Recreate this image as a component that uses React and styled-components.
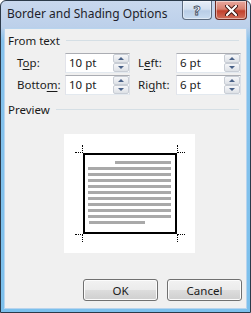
import styled, { createGlobalStyle } from 'styled-components';

const GlobalStyle = createGlobalStyle`
  html, body {
    margin: 0;
    padding: 0;
    background: #ffffff;
  }
  * {
    box-sizing: border-box;
  }
`;

const Window = styled.div`
  width: 251px;
  height: 313px;
  display: flex;
  flex-direction: column;
  border: 1px solid #2b3a4a;
  border-radius: 6px 6px 0 0;
  padding: 0 3px 3px 3px;
  background: linear-gradient(180deg, #c8d8ee 0px, #bcd0ea 26px, #86c2ec 40px, #7cc0ec 100%);
  font-family: "Noto Sans", "Open Sans", sans-serif;
  font-size: 11.5px;
  color: #1a1a1a;
`;

const TitleBar = styled.div`
  height: 27px;
  display: flex;
  align-items: flex-start;
  justify-content: space-between;
  padding-left: 3px;
`;

const Title = styled.div`
  font-size: 12px;
  line-height: 16px;
  margin-top: 5px;
  color: #1e1e2a;
`;

const CaptionButtons = styled.div`
  display: flex;
  gap: 3px;
`;

const CaptionButton = styled.div`
  width: ${p => p.$w}px;
  height: 19px;
  display: flex;
  align-items: center;
  justify-content: center;
  border: 1px solid ${p => (p.$close ? '#6b2b24' : '#5d6c80')};
  border-top: none;
  border-radius: 0 0 4px 4px;
  background: ${p =>
    p.$close
      ? 'linear-gradient(180deg, #e9a99f 0%, #d8806f 45%, #c2402c 55%, #d0705c 100%)'
      : 'linear-gradient(180deg, #e6eef8 0%, #d3e0f0 45%, #b9cde6 55%, #c9dcf0 100%)'};
  box-shadow: inset 0 0 0 1px rgba(255, 255, 255, 0.45);
`;

const HelpGlyph = styled.span`
  font-family: "DejaVu Sans", sans-serif;
  font-weight: bold;
  font-size: 13px;
  line-height: 13px;
  color: #ffffff;
  -webkit-text-stroke: 0.8px #3d4b5e;
`;

const Client = styled.div`
  flex: 1;
  display: flex;
  flex-direction: column;
  background: #f0f0f0;
  border: 1px solid #b8d4ee;
  padding: 3px 4px 7px 0;
`;

const GroupHeader = styled.div`
  display: flex;
  align-items: center;
  height: 16px;
  padding-left: 3px;
  margin-top: ${p => p.$top || 0}px;

  &::after {
    content: '';
    flex: 1;
    height: 1px;
    margin-left: 6px;
    margin-right: 3px;
    background: #d5dfe5;
  }
`;

const FieldsGrid = styled.div`
  display: grid;
  grid-template-columns: 48px 65px 46px 65px;
  row-gap: 2px;
  margin-top: 5px;
  padding-left: 12px;
  align-items: center;
`;

const Label = styled.label`
  line-height: 20px;
  padding-left: ${p => (p.$indent ? 8 : 0)}px;
  u {
    text-decoration: underline;
    text-underline-offset: 2px;
  }
`;

const SpinBox = styled.div`
  height: 20px;
  display: flex;
  border: 1px solid #abadb3;
  border-left-color: #e2e3ea;
  border-right-color: #dbdfe6;
  border-bottom-color: #e3e9ef;
  background: #ffffff;
`;

const SpinValue = styled.div`
  flex: 1;
  padding-left: 3px;
  line-height: 18px;
`;

const SpinButtons = styled.div`
  width: 16px;
  display: flex;
  flex-direction: column;
`;

const SpinButton = styled.div`
  flex: 1;
  display: flex;
  align-items: center;
  justify-content: center;
  border: 1px solid #c8cdd5;
  border-radius: 2px;
  background: linear-gradient(180deg, #f6f7f9 0%, #eaecf0 50%, #dde1e6 100%);
`;

const Arrow = styled.span`
  width: 0;
  height: 0;
  border-left: 3px solid transparent;
  border-right: 3px solid transparent;
  ${p =>
    p.$up
      ? 'border-bottom: 3px solid #4a6288;'
      : 'border-top: 3px solid #4a6288;'}
`;

const PreviewBox = styled.div`
  width: 131px;
  height: 119px;
  margin-top: 17px;
  margin-left: 59px;
  background: #ffffff;
  display: flex;
  align-items: center;
  justify-content: center;
`;

const Page = styled.div`
  position: relative;
  width: 94px;
  height: 81px;
  border: 2px solid #000000;
  padding: 6px 4px 0 4px;
  display: flex;
  flex-direction: column;
  gap: 3px;
`;

const TextLine = styled.div`
  height: 3px;
  width: ${p => p.$w}px;
  background: #a9a9a9;
  align-self: ${p => (p.$left ? 'flex-start' : 'flex-end')};
`;

/* dotted extensions of the page edges, just outside each corner */
const CornerMark = styled.div`
  position: absolute;
  width: 8px;
  height: 8px;
  ${p => (p.$top ? 'top: -10px;' : 'bottom: -10px;')}
  ${p => (p.$left ? 'left: -10px;' : 'right: -10px;')}
  ${p => (p.$top ? 'border-bottom' : 'border-top')}: 1px dotted #000;
  ${p => (p.$left ? 'border-right' : 'border-left')}: 1px dotted #000;
`;

const ButtonRow = styled.div`
  margin-top: auto;
  display: flex;
  justify-content: flex-end;
  gap: 9px;
`;

const Button = styled.button`
  width: 75px;
  height: 22px;
  font-family: inherit;
  font-size: 11.5px;
  color: #1a1a1a;
  border: 1px solid #707070;
  border-radius: 3px;
  background: linear-gradient(180deg, #f2f2f2 0%, #ebebeb 50%, #dddddd 50%, #cfcfcf 100%);
  box-shadow: inset 0 0 0 1px #fcfcfc;
  padding: 0;
`;

const Spinner = ({ value }) => (
  <SpinBox>
    <SpinValue>{value}</SpinValue>
    <SpinButtons>
      <SpinButton><Arrow $up /></SpinButton>
      <SpinButton><Arrow /></SpinButton>
    </SpinButtons>
  </SpinBox>
);

const lines = [56, 83, 83, 83, 83, 83, 83, 83, 83, 83, 56];

const App = () => (
  <>
    <GlobalStyle />
    <Window>
      <TitleBar>
        <Title>Border and Shading Options</Title>
        <CaptionButtons>
          <CaptionButton $w={30}>
            <HelpGlyph>?</HelpGlyph>
          </CaptionButton>
          <CaptionButton $w={32} $close>
            <svg width="13" height="11" viewBox="0 0 13 11">
              <path
                d="M2 1 L11 10 M11 1 L2 10"
                stroke="#3a1410"
                strokeWidth="4"
                strokeLinecap="round"
                fill="none"
              />
              <path d="M2 1 L11 10 M11 1 L2 10" stroke="#ffffff" strokeWidth="2.2" strokeLinecap="round" fill="none" />
            </svg>
          </CaptionButton>
        </CaptionButtons>
      </TitleBar>
      <Client>
        <GroupHeader>From text</GroupHeader>
        <FieldsGrid>
          <Label>T<u>o</u>p:</Label>
          <Spinner value="10 pt" />
          <Label $indent>L<u>e</u>ft:</Label>
          <Spinner value="6 pt" />
          <Label>Botto<u>m</u>:</Label>
          <Spinner value="10 pt" />
          <Label $indent>Ri<u>g</u>ht:</Label>
          <Spinner value="6 pt" />
        </FieldsGrid>
        <GroupHeader $top={6}>Preview</GroupHeader>
        <PreviewBox>
          <Page>
            <CornerMark $top $left />
            <CornerMark $top />
            <CornerMark $left />
            <CornerMark />
            {lines.map((w, i) => (
              <TextLine key={i} $w={w} $left={i === lines.length - 1} />
            ))}
          </Page>
        </PreviewBox>
        <ButtonRow>
          <Button>OK</Button>
          <Button>Cancel</Button>
        </ButtonRow>
      </Client>
    </Window>
  </>
);

export default App;
